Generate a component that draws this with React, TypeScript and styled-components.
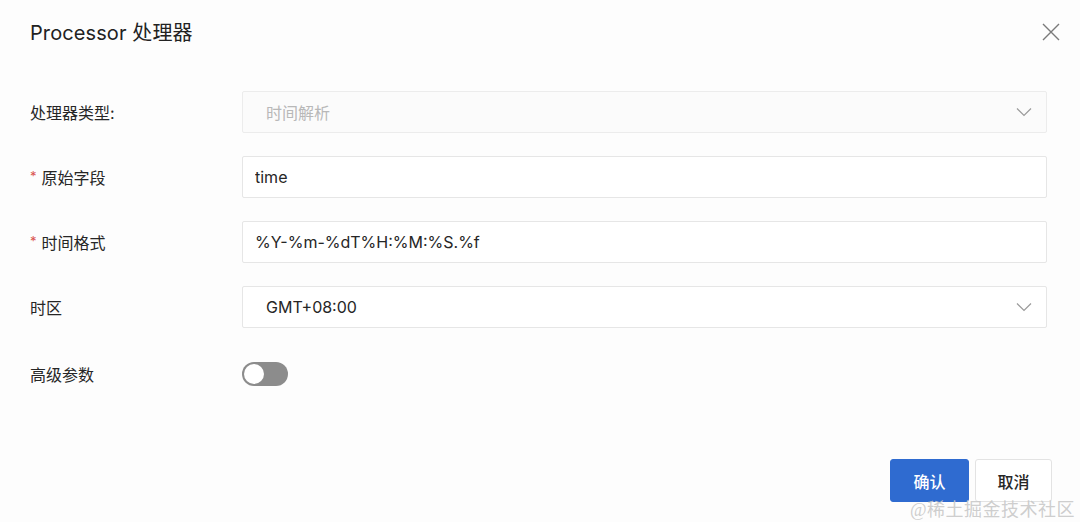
import { useState } from 'react'
import styled, { createGlobalStyle } from 'styled-components'

const GlobalStyle = createGlobalStyle`
  html, body {
    margin: 0;
    padding: 0;
    background: #fdfdfd;
  }
  body {
    font-family: Inter, "Noto Sans CJK SC", sans-serif;
    color: #262626;
  }
`

const Dialog = styled.div`
  position: relative;
  width: 1080px;
  height: 522px;
  background: #fdfdfd;
  overflow: hidden;
`

const Header = styled.header`
  height: 62px;
  display: flex;
  align-items: center;
  justify-content: space-between;
  padding: 0 18px 0 30px;
  box-sizing: border-box;
`

const Title = styled.h2`
  margin: 0;
  font-size: 20px;
  font-weight: 400;
  color: #222;
  letter-spacing: 0.1px;
`

const CloseButton = styled.button`
  width: 22px;
  height: 22px;
  padding: 0;
  margin-top: 2px;
  border: none;
  background: transparent;
  display: flex;
  align-items: center;
  justify-content: center;
  cursor: pointer;
`

const Form = styled.div`
  display: flex;
  flex-direction: column;
  gap: 23px;
  padding: 29px 33px 0 30px;
`

const Row = styled.div<{ $tall?: boolean }>`
  display: grid;
  grid-template-columns: 212px 1fr;
  align-items: center;
  height: ${({ $tall }) => ($tall ? '46px' : '42px')};
`

const Label = styled.label`
  font-size: 16px;
  color: #262626;
  display: flex;
  align-items: center;
  margin-top: -1px;
`

const Required = styled.span`
  color: #d9534f;
  font-size: 13px;
  margin-right: 5px;
  margin-top: -2px;
`

const Input = styled.input`
  box-sizing: border-box;
  width: 100%;
  height: 42px;
  padding: 0 12px;
  border: 1px solid #e6e6e6;
  border-radius: 2px;
  background: #fff;
  font-family: Inter, "Noto Sans CJK SC", sans-serif;
  font-size: 16px;
  color: #262626;
  outline: none;
`

const Select = styled.div<{ $disabled?: boolean }>`
  box-sizing: border-box;
  height: 42px;
  padding: 0 14px 0 23px;
  border: 1px solid ${({ $disabled }) => ($disabled ? '#ececec' : '#e6e6e6')};
  border-radius: 2px;
  background: ${({ $disabled }) => ($disabled ? '#fbfbfb' : '#fff')};
  display: flex;
  align-items: center;
  justify-content: space-between;
  font-size: 16px;
  color: ${({ $disabled }) => ($disabled ? '#b8b8b8' : '#262626')};
`

const Switch = styled.button<{ $on: boolean }>`
  width: 46px;
  height: 24px;
  padding: 0;
  border: none;
  border-radius: 12px;
  background: ${({ $on }) => ($on ? '#2f6bd0' : '#8c8c8c')};
  position: relative;
  cursor: pointer;
  display: block;
`

const Knob = styled.span<{ $on: boolean }>`
  position: absolute;
  top: 2px;
  left: ${({ $on }) => ($on ? '24px' : '2px')};
  width: 20px;
  height: 20px;
  border-radius: 50%;
  background: #fff;
  transition: left 0.2s;
`

const Footer = styled.footer`
  display: flex;
  justify-content: flex-end;
  gap: 6px;
  padding: 62px 28px 0 0;
`

const Button = styled.button<{ $primary?: boolean }>`
  width: ${({ $primary }) => ($primary ? '79px' : '77px')};
  height: 43px;
  border-radius: 3px;
  border: 1px solid ${({ $primary }) => ($primary ? '#2f6bd0' : '#e3e3e3')};
  background: ${({ $primary }) => ($primary ? '#2f6bd0' : '#fff')};
  color: ${({ $primary }) => ($primary ? '#fff' : '#262626')};
  font-family: Inter, "Noto Sans CJK SC", sans-serif;
  font-size: 16px;
  font-weight: 500;
  cursor: pointer;
`

const Watermark = styled.div`
  position: absolute;
  right: 5px;
  bottom: 1px;
  font-family: "Liberation Serif", "Noto Sans CJK SC", serif;
  font-size: 18px;
  color: rgba(200, 200, 200, 0.9);
  pointer-events: none;
  letter-spacing: 0.5px;
`

const Chevron = () => (
  <svg width="16" height="10" viewBox="0 0 16 10" fill="none">
    <path d="M1 1.5 L8 8.5 L15 1.5" stroke="#9a9a9a" strokeWidth="1.2" />
  </svg>
)

export default function App() {
  const [advanced, setAdvanced] = useState(false)
  const [field, setField] = useState('time')
  const [format, setFormat] = useState('%Y-%m-%dT%H:%M:%S.%f')

  return (
    <Dialog>
      <GlobalStyle />
      <Header>
        <Title>Processor 处理器</Title>
        <CloseButton aria-label="close">
          <svg width="20" height="20" viewBox="0 0 20 20">
            <path d="M2 2 L18 18 M18 2 L2 18" stroke="#7a7a7a" strokeWidth="1.4" />
          </svg>
        </CloseButton>
      </Header>

      <Form>
        <Row>
          <Label>处理器类型:</Label>
          <Select $disabled>
            <span>时间解析</span>
            <Chevron />
          </Select>
        </Row>
        <Row>
          <Label>
            <Required>*</Required>原始字段
          </Label>
          <Input value={field} onChange={e => setField(e.target.value)} />
        </Row>
        <Row>
          <Label>
            <Required>*</Required>时间格式
          </Label>
          <Input value={format} onChange={e => setFormat(e.target.value)} />
        </Row>
        <Row>
          <Label>时区</Label>
          <Select>
            <span>GMT+08:00</span>
            <Chevron />
          </Select>
        </Row>
        <Row $tall>
          <Label>高级参数</Label>
          <div>
            <Switch $on={advanced} onClick={() => setAdvanced(!advanced)}>
              <Knob $on={advanced} />
            </Switch>
          </div>
        </Row>
      </Form>

      <Footer>
        <Button $primary>确认</Button>
        <Button>取消</Button>
      </Footer>

      <Watermark>@稀土掘金技术社区</Watermark>
    </Dialog>
  )
}
